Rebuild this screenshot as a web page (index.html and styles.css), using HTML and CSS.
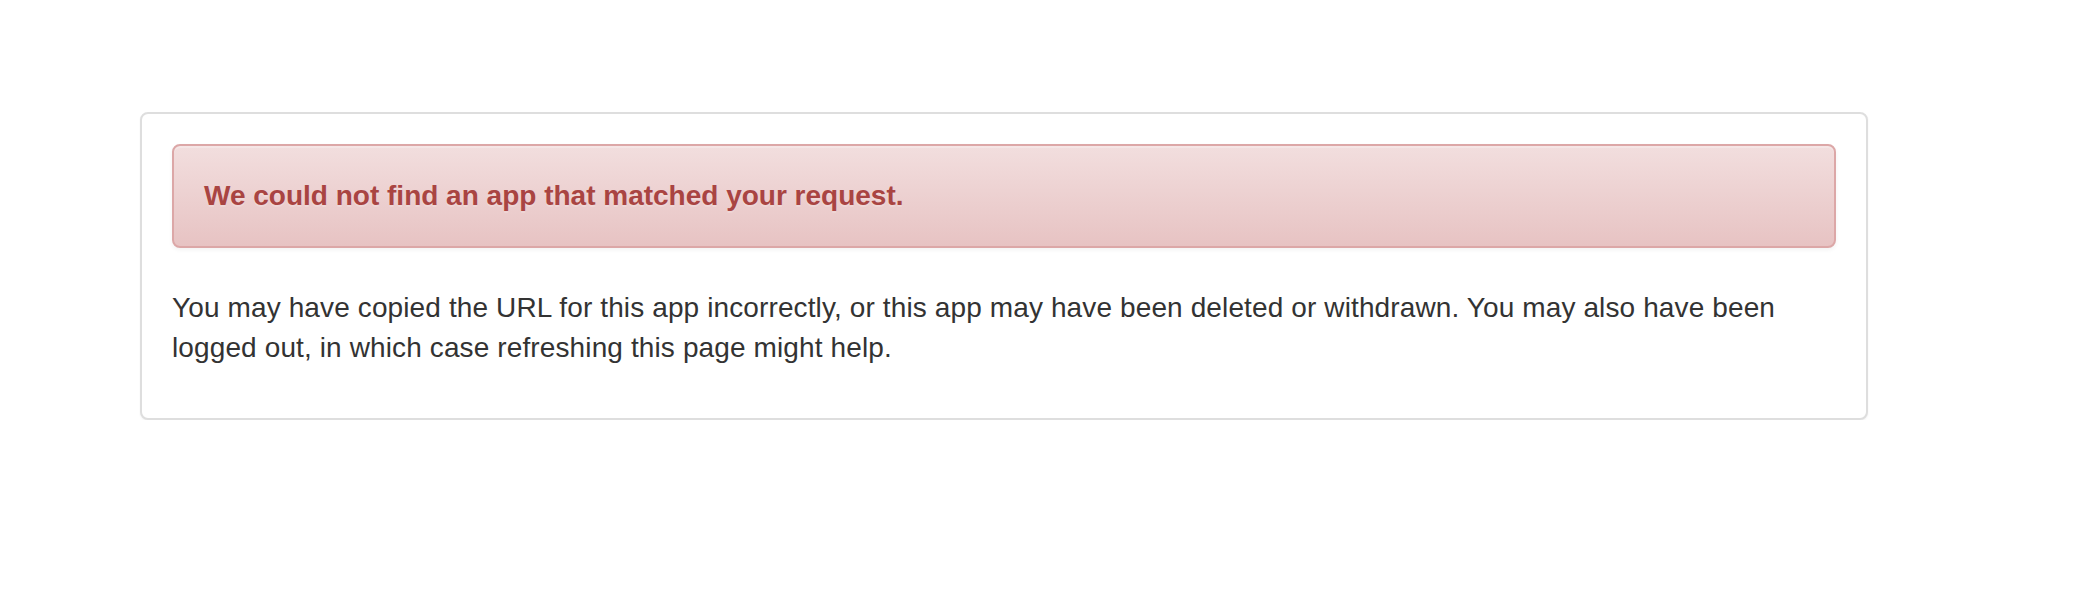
FILE: index.html
```html
<!DOCTYPE html>
<html lang="en">
<head>
<meta charset="utf-8">
<title>App not found</title>
<link rel="stylesheet" href="styles.css">
</head>
<body>
<main class="page">
  <section class="well">
    <div class="alert alert-danger">
      <strong>We could not find an app that matched your request.</strong>
    </div>
    <p class="message">You may have copied the URL for this app incorrectly, or this app may have been deleted or withdrawn. You may also have been logged out, in which case refreshing this page might help.</p>
  </section>
</main>
</body>
</html>
```

FILE: styles.css
```css
html, body {
  margin: 0;
  padding: 0;
  background: #ffffff;
}

body {
  font-family: "Liberation Sans", Arial, Helvetica, sans-serif;
  font-size: 28px;
  line-height: 40px;
  color: #333333;
}

.page {
  padding: 112px 0 0 140px;
}

.well {
  width: 1728px;
  box-sizing: border-box;
  padding: 30px 30px 30px 30px;
  border: 2px solid #dedede;
  border-radius: 8px;
  background: #ffffff;
  box-shadow: 0 1px 2px rgba(0, 0, 0, 0.06);
}

.alert {
  padding: 30px;
  margin-bottom: 40px;
  border: 2px solid #dca7a7;
  border-radius: 8px;
  color: #a94442;
  background-color: #f2dede;
  background-image: linear-gradient(to bottom, #f2dede 0%, #e7c3c3 100%);
  box-shadow: inset 0 2px 0 rgba(255, 255, 255, 0.25), 0 2px 4px rgba(0, 0, 0, 0.05);
  text-shadow: 0 2px 0 rgba(255, 255, 255, 0.2);
}

.alert strong {
  font-weight: bold;
}

.message {
  margin: 0 0 20px 0;
  letter-spacing: 0.12px;
}
```
